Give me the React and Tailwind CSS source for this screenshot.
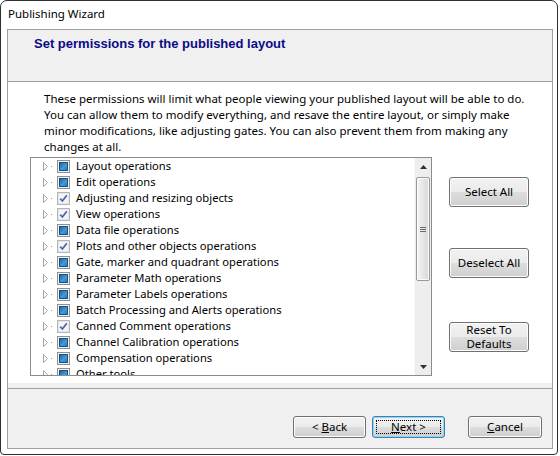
import React from "react";

const ui = { fontFamily: "'Noto Sans', 'Open Sans', sans-serif" };

const items = [
  ["Layout operations", "part"],
  ["Edit operations", "part"],
  ["Adjusting and resizing objects", "on"],
  ["View operations", "on"],
  ["Data file operations", "part"],
  ["Plots and other objects operations", "on"],
  ["Gate, marker and quadrant operations", "part"],
  ["Parameter Math operations", "part"],
  ["Parameter Labels operations", "part"],
  ["Batch Processing and Alerts operations", "part"],
  ["Canned Comment operations", "on"],
  ["Channel Calibration operations", "part"],
  ["Compensation operations", "part"],
  ["Other tools", "part"],
];

/* tri-state checkbox, drawn like the old Windows one */
function Check({ state }) {
  if (state === "on") {
    return (
      <svg width="13" height="13" viewBox="0 0 13 13" className="shrink-0">
        <rect x="0.5" y="0.5" width="12" height="12" fill="#f4f4f4" stroke="#b4b4b4" />
        <rect x="1.5" y="1.5" width="10" height="10" fill="none" stroke="#e6e6e6" />
        <path d="M3.2 6.6 L5.4 9 L9.8 3.4" fill="none" stroke="#4d63b8" strokeWidth="1.7" />
      </svg>
    );
  }
  return (
    <svg width="13" height="13" viewBox="0 0 13 13" className="shrink-0">
      <defs>
        <linearGradient id="cbBlue" x1="0" y1="0" x2="1" y2="1">
          <stop offset="0" stopColor="#1d5d99" />
          <stop offset="0.55" stopColor="#3d9bd6" />
          <stop offset="1" stopColor="#2a78b8" />
        </linearGradient>
      </defs>
      <rect x="0.5" y="0.5" width="12" height="12" fill="#f2f2f2" stroke="#8e8f8f" />
      <rect x="2.5" y="2.5" width="8" height="8" fill="url(#cbBlue)" stroke="#1c4f80" />
    </svg>
  );
}

function Expander() {
  return (
    <svg width="6" height="9" viewBox="0 0 6 9" className="shrink-0">
      <polygon points="0.5,0.5 4.5,4.5 0.5,8.5" fill="#fff" stroke="#a6a6a6" />
    </svg>
  );
}

function TreeRow({ label, state }) {
  return (
    <div className="h-[16px] flex items-center pl-[12px] whitespace-nowrap">
      <Expander />
      <span className="w-[1px] h-[1px] bg-[#9a9a9a] ml-[2px] shrink-0" />
      <span className="ml-[5px] flex"><Check state={state} /></span>
      <span className="ml-[6px] text-[11.2px] text-black leading-[16px]">{label}</span>
    </div>
  );
}

function Scrollbar() {
  return (
    <div className="w-[17px] h-full bg-[#eeeeee] border-l border-[#f7f7f7] flex flex-col items-center shrink-0">
      <div className="h-[17px] w-full flex items-center justify-center">
        <svg width="7" height="4" viewBox="0 0 7 4">
          <polygon points="3.5,0 7,4 0,4" fill="#303030" />
        </svg>
      </div>
      <div className="mt-[2px] w-[14px] h-[104px] rounded-[2px] border border-[#9a9a9a] bg-[linear-gradient(to_right,#f5f5f5,#e6e6e6_50%,#d9d9d9)] shadow-[inset_0_0_0_1px_#fbfbfb] flex flex-col items-center justify-center gap-[1px]">
        <span className="w-[6px] h-[1px] bg-[#6a6a6a]" />
        <span className="w-[6px] h-[1px] bg-[#6a6a6a]" />
        <span className="w-[6px] h-[1px] bg-[#6a6a6a]" />
      </div>
      <div className="flex-1" />
      <div className="h-[17px] w-full flex items-center justify-center">
        <svg width="7" height="4" viewBox="0 0 7 4">
          <polygon points="0,0 7,0 3.5,4" fill="#303030" />
        </svg>
      </div>
    </div>
  );
}

function WinButton({ children, className = "", focused = false }) {
  const edge = focused
    ? "border-[#3c7fb1] shadow-[inset_0_0_0_1px_#8fd6f7]"
    : "border-[#707070] shadow-[inset_0_0_0_1px_#fcfcfc]";
  return (
    <div
      className={`relative rounded-[3px] border ${edge} bg-[linear-gradient(to_bottom,#f2f2f2_0%,#ebebeb_50%,#dddddd_51%,#cfcfcf_100%)] flex items-center justify-center text-[11.5px] text-black text-center leading-[14px] ${className}`}
    >
      {focused && (
        <span className="absolute inset-[3px] border border-dotted border-black" />
      )}
      <span className="relative">{children}</span>
    </div>
  );
}

export default function App() {
  return (
    <div className="w-[560px] h-[456px] bg-white" style={ui}>
      <div className="w-[558px] h-[455px] border border-[#2e2e2e] rounded-t-[7px] rounded-b-[4px] flex flex-col bg-white">
        {/* title bar */}
        <div className="h-[28px] pl-[7px] pt-[5px] text-[11.5px] leading-[16px] text-black">
          Publishing Wizard
        </div>

        {/* wizard page */}
        <div className="ml-[6px] mr-[4px] h-[420px] border border-[#a0a0a0] flex flex-col">
          <div className="h-[52px] bg-[#f0f0f0] border-b border-[#a0a0a0] pl-[26px] pt-[6px]">
            <h1
              className="text-[13px] font-bold text-[#0b0b86] leading-[16px]"
              style={{ fontFamily: "'Liberation Sans', Arial, sans-serif" }}
            >
              Set permissions for the published layout
            </h1>
          </div>

          <div className="h-[301px] bg-white flex flex-col">
            <p className="pt-[9px] pl-[36px] text-[11.5px] leading-[16px] text-black whitespace-nowrap">
              These permissions will limit what people viewing your published layout will be able to do.
              <br />
              You can allow them to modify everything, and resave the entire layout, or simply make
              <br />
              minor modifications, like adjusting gates. You can also prevent them from making any
              <br />
              changes at all.
            </p>

            <div className="mt-[2px] pl-[22px] flex">
              <div className="w-[402px] h-[219px] border border-[#8c8c8c] flex overflow-hidden">
                <div className="flex-1 overflow-hidden">
                  {items.map(([label, state]) => (
                    <TreeRow key={label} label={label} state={state} />
                  ))}
                </div>
                <Scrollbar />
              </div>

              <div className="ml-[17px] flex flex-col">
                <WinButton className="mt-[20px] w-[80px] h-[30px]">Select All</WinButton>
                <WinButton className="mt-[41px] w-[80px] h-[30px]">Deselect All</WinButton>
                <WinButton className="mt-[44px] w-[80px] h-[30px]">
                  Reset To
                  <br />
                  Defaults
                </WinButton>
              </div>
            </div>
          </div>

          <div className="h-[5px] bg-[#f0f0f0]" />
          <div className="h-[60px] bg-[#f0f0f0] border-t border-[#a0a0a0] flex justify-end items-start pt-[27px] pr-[10px]">
            <WinButton className="w-[73px] h-[22px]">
              &lt; <span className="underline">B</span>ack
            </WinButton>
            <WinButton focused className="ml-[6px] w-[73px] h-[22px]">
              <span className="underline">N</span>ext &gt;
            </WinButton>
            <WinButton className="ml-[23px] w-[74px] h-[22px]">
              <span className="underline">C</span>ancel
            </WinButton>
          </div>
        </div>
      </div>
    </div>
  );
}
